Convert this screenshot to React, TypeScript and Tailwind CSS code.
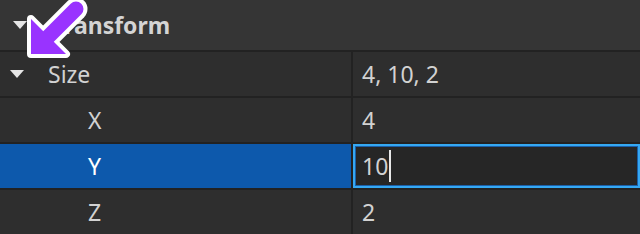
import React from "react";

const Tri = ({ className }: { className?: string }) => (
  <svg width="14" height="8" viewBox="0 0 14 8" className={className}>
    <polygon points="0,0 14,0 7,8" fill="#e6e6e6" />
  </svg>
);

export default function App() {
  return (
    <div
      className="relative w-[640px] h-[234px] overflow-hidden bg-[#2e2e2e] text-[23px] text-[#d2d2d2]"
      style={{ fontFamily: '"Noto Sans", "Open Sans", sans-serif' }}
    >
      <div className="h-[50px] bg-[#353535] flex items-center">
        <Tri className="ml-[13px]" />
        <span className="ml-[25px] font-bold text-[#d4d4d4]">Transform</span>
      </div>

      <div className="h-[46px] border-t-2 border-[#222222] flex">
        <div className="w-[353px] border-r-2 border-[#222222] flex items-center">
          <Tri className="ml-[10px]" />
          <span className="ml-[24px]">Size</span>
        </div>
        <div className="flex-1 flex items-center pl-[9px]">4, 10, 2</div>
      </div>

      <div className="h-[46px] border-t-2 border-[#222222] flex">
        <div className="w-[353px] border-r-2 border-[#222222] flex items-center pl-[88px]">X</div>
        <div className="flex-1 flex items-center pl-[9px]">4</div>
      </div>

      <div className="h-[46px] border-t-2 border-[#222222] flex">
        <div className="w-[353px] border-r-2 border-[#222222] bg-[#0d59ac] flex items-center pl-[88px] text-white">
          Y
        </div>
        <div className="flex-1 border-2 border-[#35a8f3]">
          <div className="h-full border border-[#1b5fa8] bg-[#262626] flex items-center pl-[6px]">
            <span>10</span>
            <span className="ml-[1px] w-[2px] h-[32px] bg-[#e8e8e8]" />
          </div>
        </div>
      </div>

      <div className="h-[46px] border-t-2 border-[#222222] flex">
        <div className="w-[353px] border-r-2 border-[#222222] flex items-center pl-[88px]">Z</div>
        <div className="flex-1 flex items-center pl-[9px]">2</div>
      </div>

      <svg
        className="absolute left-0 top-0"
        width="100"
        height="70"
        viewBox="0 0 100 70"
      >
        <g stroke="#ffffff" fill="#ffffff" strokeLinejoin="round" strokeLinecap="round">
          <line x1="48" y1="37" x2="76" y2="9" strokeWidth="23" />
          <polygon points="31,54 31,19 66,54" strokeWidth="8" />
        </g>
        <g stroke="#9933ff" fill="#9933ff" strokeLinecap="round">
          <line x1="48" y1="37" x2="76" y2="9" strokeWidth="15" />
          <polygon points="31,54 31,19 66,54" strokeWidth="0" />
        </g>
      </svg>
    </div>
  );
}
